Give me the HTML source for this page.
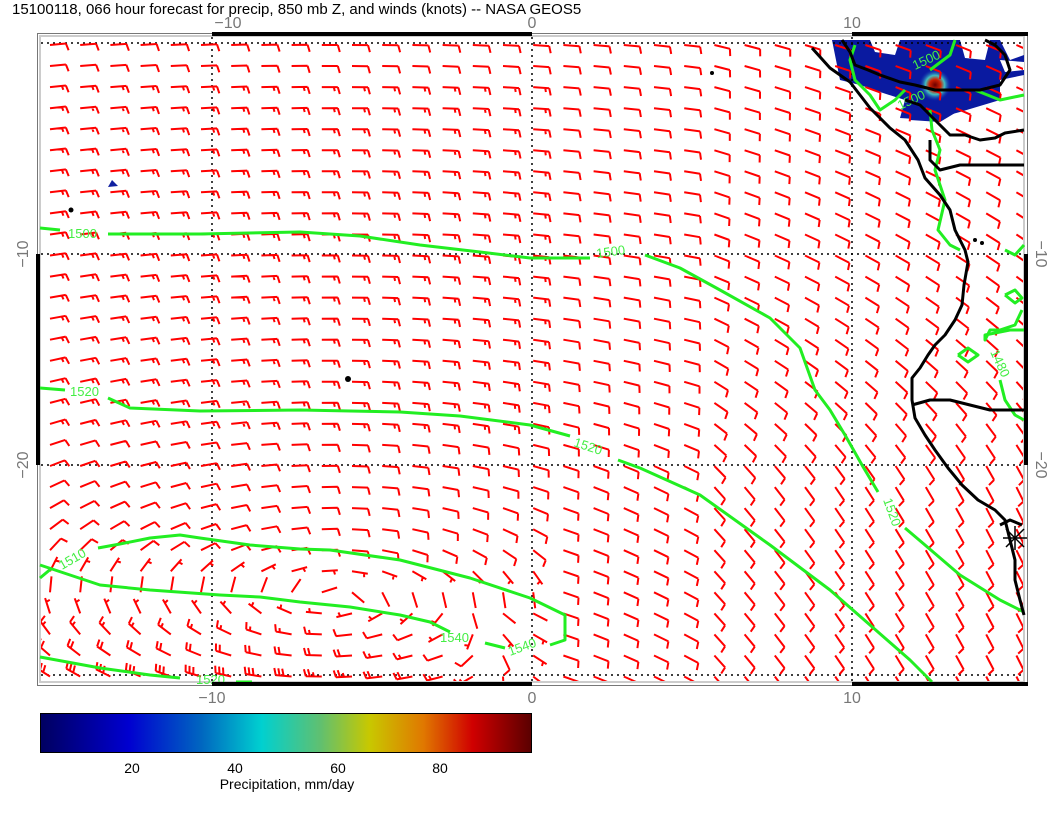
<!DOCTYPE html>
<html><head><meta charset="utf-8"><style>
html,body{margin:0;padding:0;background:#fff;}
body{width:1056px;height:816px;overflow:hidden;position:relative;font-family:"Liberation Sans",sans-serif;}
svg{position:absolute;left:0;top:0;}
</style></head><body>
<svg id="s" width="1056" height="816" viewBox="0 0 1056 816" xmlns="http://www.w3.org/2000/svg">
<defs>
<linearGradient id="jet" x1="0" x2="1" y1="0" y2="0">
<stop offset="0" stop-color="#000060"/>
<stop offset="0.18" stop-color="#0000d0"/>
<stop offset="0.33" stop-color="#0068c0"/>
<stop offset="0.45" stop-color="#00d0d0"/>
<stop offset="0.57" stop-color="#60c070"/>
<stop offset="0.67" stop-color="#c8c800"/>
<stop offset="0.78" stop-color="#e07800"/>
<stop offset="0.88" stop-color="#d00000"/>
<stop offset="1" stop-color="#5a0000"/>
</linearGradient>
<radialGradient id="spot" cx="0.5" cy="0.5" r="0.5">
<stop offset="0" stop-color="#6a0000"/>
<stop offset="0.35" stop-color="#d02000"/>
<stop offset="0.6" stop-color="#40c0c0"/>
<stop offset="1" stop-color="#1030b0" stop-opacity="0"/>
</radialGradient>
<clipPath id="plot"><rect x="41" y="37" width="982" height="644"/></clipPath>
</defs>
<text x="12" y="14" font-size="15" fill="#000">15100118, 066 hour forecast for precip, 850 mb Z, and winds (knots) -- NASA GEOS5</text>
<rect x="37.5" y="33.5" width="990" height="652" fill="none" stroke="#777" stroke-width="1"/>
<rect x="40" y="36" width="984" height="646" fill="none" stroke="#ccc" stroke-width="2"/>
<g fill="#0a1aa0">
<path d="M832 40 L1000 40 L1010 60 L1024 55 L1024 75 L1000 80 L1000 100 L960 112 L930 120 L900 118 L905 100 L880 92 L860 85 L840 80 Z"/>
<path d="M910 100 L940 95 L960 110 L940 122 L910 120 Z"/>
</g>
<circle cx="935" cy="85" r="16" fill="url(#spot)"/>
<g fill="#fff">
<path d="M870 40 L900 40 L895 55 L875 52 Z"/>
<path d="M960 40 L990 40 L985 60 L965 58 Z"/>
<path d="M1000 60 L1024 62 L1024 70 L1005 72 Z"/>
</g>
<g stroke="#000" stroke-width="1.5" stroke-dasharray="2 4" fill="none">
<line x1="212" y1="37" x2="212" y2="681"/>
<line x1="532" y1="37" x2="532" y2="681"/>
<line x1="852" y1="37" x2="852" y2="681"/>
<line x1="41" y1="43" x2="1023" y2="43"/>
<line x1="41" y1="254" x2="1023" y2="254"/>
<line x1="41" y1="465" x2="1023" y2="465"/>
<line x1="41" y1="675" x2="1023" y2="675"/>
</g>
<g id="barbs" stroke="#f00" stroke-width="2" fill="none" stroke-linecap="butt" clip-path="url(#plot)"></g>
<g stroke="#22ee22" stroke-width="3" fill="none" stroke-linejoin="round">
<polyline points="40,228 60,230"/>
<polyline points="108,234 200,234 300,232 360,236 420,245 480,252 530,258 590,258"/>
<polyline points="645,255 680,268 720,290 770,318 800,348 815,390 830,410 845,435 862,465 878,492"/>
<polyline points="905,528 925,545 960,575 1000,600 1024,612"/>
<polyline points="40,388 65,390"/>
<polyline points="108,398 130,408 200,411 300,410 400,412 460,416 530,425 570,436"/>
<polyline points="618,460 640,468 700,495 770,545 830,590 870,625 910,660 932,682"/>
<polyline points="40,578 52,568"/>
<polyline points="98,548 120,544 150,538 180,535 200,538 250,545 300,549 330,550 400,560 470,578 530,598 565,615 565,640 550,645"/>
<polyline points="40,565 70,575 100,585 150,590 220,595 260,597 300,602 350,607 400,615 430,622 450,632"/>
<polyline points="485,643 505,648"/>
<polyline points="40,657 100,668 150,675 180,678"/>
<polyline points="236,682 252,682"/>
<polyline points="855,45 850,60 855,80 870,95 880,110 895,100 905,90"/>
<polyline points="955,40 950,55 930,70"/>
<polyline points="975,90 1000,100 1024,95"/>
<polyline points="930,110 932,130 940,150 935,170 945,200 938,230 950,245 960,250"/>
<polyline points="1024,245 1015,255 1005,250"/>
<polyline points="1005,295 1015,290 1022,298 1015,303 1005,295"/>
<polyline points="1022,310 1015,325 1000,330 990,330 985,340 985,335 1010,330 1024,330"/>
<polyline points="958,355 968,348 978,355 968,362 958,355"/>
<polyline points="1000,380 1005,400 1015,415 1024,420"/>
</g>
<g fill="#44ee44" font-size="13">
<text x="68" y="238">1500</text>
<text x="597" y="258" transform="rotate(-8 597 258)">1500</text>
<text x="70" y="396">1520</text>
<text x="573" y="446" transform="rotate(18 573 446)">1520</text>
<text x="883" y="500" transform="rotate(70 883 500)">1520</text>
<text x="62" y="570" transform="rotate(-30 62 570)">1510</text>
<text x="440" y="642">1540</text>
<text x="510" y="656" transform="rotate(-20 510 656)">1540</text>
<text x="196" y="684">1520</text>
<text x="915" y="70" transform="rotate(-25 915 70)">1500</text>
<text x="900" y="110" transform="rotate(-25 900 110)">1500</text>
<text x="990" y="352" transform="rotate(65 990 352)">1480</text>
</g>
<g stroke="#000" stroke-width="3" fill="none" stroke-linejoin="round">
<polyline points="812,48 830,68 850,82 870,108 890,128 905,140 918,160 925,178 940,195 950,210 955,230 965,250 968,262 964,285 962,305 955,320 945,335 935,345 928,355 920,368 912,378 912,400 915,418 925,435 935,450 948,468 962,485 978,500 995,510 1005,520 1010,540 1015,560 1015,580 1020,600 1024,615"/>
<polyline points="842,40 850,52 855,65 868,70 880,75 900,82 915,85 935,90 960,90 980,90 1000,85 1010,70 1005,55 995,45 985,40"/>
<polyline points="905,100 920,105 930,115 940,125 950,135 965,135 980,140 995,138 1005,133 1024,130"/>
<polyline points="930,140 930,160 940,170 960,165 1024,165"/>
<polyline points="912,405 930,400 950,400 970,405 990,410 1024,410"/>
<polyline points="1000,525 1010,520 1022,525"/>
</g>
<g fill="#000"><circle cx="71" cy="210" r="2.5"/><circle cx="348" cy="379" r="3"/><circle cx="712" cy="73" r="2"/><circle cx="975" cy="240" r="2"/><circle cx="982" cy="243" r="2"/></g>
<path d="M112 180 L118 186 L108 187 Z" fill="#1020a0"/>
<g stroke="#000" stroke-width="1.5"><line x1="1003" y1="538" x2="1027" y2="538"/><line x1="1015" y1="526" x2="1015" y2="550"/><line x1="1006" y1="529" x2="1024" y2="547"/><line x1="1024" y1="529" x2="1006" y2="547"/></g>
<g fill="#000">
<rect x="212" y="32" width="320" height="4"/>
<rect x="852" y="32" width="176" height="4"/>
<rect x="212" y="682" width="320" height="4"/>
<rect x="852" y="682" width="176" height="4"/>
<rect x="36" y="254" width="4" height="211"/>
<rect x="1024" y="254" width="4" height="211"/>
</g>
<g fill="#777" font-size="16" text-anchor="middle">
<text x="228" y="28">−10</text><text x="532" y="28">0</text><text x="852" y="28">10</text>
<text x="212" y="703">−10</text><text x="532" y="703">0</text><text x="852" y="703">10</text>
<text transform="translate(28 254) rotate(-90)">−10</text>
<text transform="translate(28 465) rotate(-90)">−20</text>
<text transform="translate(1036 254) rotate(90)">−10</text>
<text transform="translate(1036 465) rotate(90)">−20</text>
</g>
<rect x="40.5" y="713.5" width="491" height="39" fill="url(#jet)" stroke="#000"/>
<g fill="#000" font-size="14" text-anchor="middle">
<text x="132" y="773">20</text><text x="235" y="773">40</text><text x="338" y="773">60</text><text x="440" y="773">80</text>
<text x="287" y="789">Precipitation, mm/day</text>
</g>
</svg>
<script>
(function(){
var g=document.getElementById('barbs'),ns='http://www.w3.org/2000/svg',d='';
function line(a,b,c,e){d+='M'+a.toFixed(1)+' '+b.toFixed(1)+'L'+c.toFixed(1)+' '+e.toFixed(1);}
var cx=330,cy=597;
for(var r=0;r<31;r++){
 var y=45+r*21.05;
 for(var c=0;c<33;c++){
  var x=50+c*30.2;
  var coastX = y<250? 812+(y-45)*0.75 : (y<400? 960-(y-250)*0.3 : 915+(y-400)*0.38);
  var dx=(x-cx)*0.18, dy=(cy-y);
  if(x>700){dx=(x-cx)*0.35;}
  var eastF = x<450?0:(x>580?1:(x-450)/130);
  if(dy<0) dy = dy*(1-eastF) + 120*eastF;
  if(x>560 && dy<120) dy = Math.max(dy,120);
  var u=-dy, v=dx;
  var m=Math.sqrt(u*u+v*v)||1;
  var ddx=-u/m, ddy=v/m;
  var sp;
  if(y>=cy){
   sp=(y-cy)*0.36+3;
   if(x>300) sp*=Math.max(0.35,1-(x-300)/350);
   if(x>560) sp=11;
  } else {
   if(y<80) sp=11; else if(y<430 && x<560) sp=15; else sp=11;
   if(cy-y<35 && x<560) sp=Math.min(sp,(cy-y)*0.25+2);
  }
  if(x>coastX+10 && y<450) sp=10;
  var L=16;
  var ex=x+ddx*L, ey=y+ddy*L;
  line(x,y,ex,ey);
  var nx=-ddy, ny=ddx;
  var n10=Math.floor(sp/10), h=(sp%10)>=5?1:0;
  var pos=0;
  for(var i=0;i<n10;i++){
   var px=ex-ddx*pos, py=ey-ddy*pos;
   line(px,py,px+nx*7+ddx*2,py+ny*7+ddy*2);
   pos+=4;
  }
  if(h){
   if(n10==0)pos=4;
   var px=ex-ddx*pos, py=ey-ddy*pos;
   line(px,py,px+nx*4+ddx*1,py+ny*4+ddy*1);
  }
 }
}
var p=document.createElementNS(ns,'path');p.setAttribute('d',d);g.appendChild(p);
})();
</script>
</body></html>
